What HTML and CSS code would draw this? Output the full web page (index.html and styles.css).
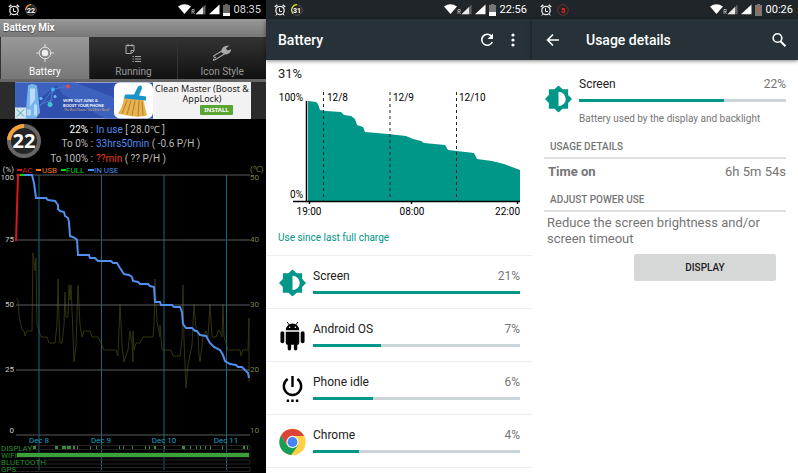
FILE: index.html
```html
<!DOCTYPE html>
<html lang="en">
<head>
  <meta charset="UTF-8">
  <title>Battery</title>
  <meta name="viewport" content="width=device-width, initial-scale=1.0">
  <link rel="stylesheet" href="styles.css">
</head>
<body>
  <!-- shared icons -->
  <svg class="defs" width="0" height="0">
    <symbol id="alarm" viewBox="0 0 12 12">
      <g fill="none" stroke="#e8e8e8">
        <circle cx="6" cy="6.5" r="4.2" stroke-width="1.3"/>
        <path d="M.8 3 3.3.9M11.200 3 8.700.9" stroke-width="1.500"/>
        <path d="M2.800 10 1.800 11.500M9.200 10 10.200 11.500M5.500 4.200V7.500H8"/>
      </g>
    </symbol>
    <symbol id="signals" viewBox="0 0 54 13">
      <path d="M0 3.500Q6.500-1 13 3.500L6.500 11Z" fill="#fff"/>
      <path d="M14 11V6.500H16.200V8.500H14M15 8.500 16.500 11" fill="none" stroke="#bbb" stroke-width=".8"/>
      <path d="M17.500 11.200 27.500 1.500V11.200Z" fill="#666"/>
      <path d="M17.500 11.200 25 4V11.200Z" fill="#e8e8e8"/>
      <path d="M31 11.200 41.500 1.500V11.200Z" fill="#fff"/>
    </symbol>
    <symbol id="brightness" viewBox="0 0 28 28">
      <path d="M14 0 18.200 4H24V9.800L28 14 24 18.200V24H18.200L14 28 9.800 24H4V18.200L0 14 4 9.800V4H9.800Z" fill="#009688"/>
      <path d="M14 6.500A7.500 7.500 0 0 1 14 21.500Z" fill="#fff"/>
    </symbol>
  </svg>

  <div class="screens">
    <section class="phone mix">
      <div class="status">
        <svg class="alarm"><use href="#alarm"/></svg>
        <svg class="ring" viewBox="0 0 12 12">
          <circle cx="6" cy="6" r="5.3" fill="#222" stroke="#555"/>
          <path d="M.7 6A5.300 5.300 0 0 1 6 .7" fill="none" stroke="#f59a23" stroke-width="1.300"/>
          <text x="6" y="8.500" fill="#fff">22</text>
        </svg>
        <svg class="signals"><use href="#signals"/></svg>
        <svg class="cell" viewBox="0 0 7 12"><path d="M0 1H2V0H5V1H7V12H0Z" fill="#666"/><path d="M0 9H7V12H0Z" fill="#fff"/></svg>
        <span>08:35</span>
      </div>
      <h1 class="mix-title">Battery Mix</h1>
      <nav class="tabs">
        <button class="active">
          <svg viewBox="0 0 18 18"><g fill="none" stroke="#ddd"><circle cx="9" cy="9" r="5.800"/><path d="M9 0V4M9 14V18M0 9H4M14 9H18"/></g><circle cx="9" cy="9" r="3.200" fill="#eee"/></svg>
          Battery
        </button>
        <button>
          <svg viewBox="0 0 18 18"><g fill="none" stroke="#aaa"><path d="M2 1.500H10V7L7.500 9.500H2ZM7 9V6.500H10M4 0V2.500M8 0V2.500"/><path d="M11 12.500H17M11 15H17M11 17.500H17M8.500 12.500H9.800M8.500 15H9.800M8.500 17.500H9.800"/></g></svg>
          Running
        </button>
        <button>
          <svg viewBox="0 0 18 18"><path d="M1 14 10 8.500" stroke="#aaa" stroke-width="5" stroke-linecap="round"/><path d="M1.500 13.800 10 8.500" stroke="#222" stroke-width="2.800" stroke-linecap="round"/><circle cx="2" cy="13.500" r=".9" fill="#aaa"/><path d="M8.500 8.500Q8 3.500 12.500 2L16.500 1.500 13 4.200 14.500 6.500 18.500 5Q17.500 10 12 10.500Z" fill="#aaa"/></svg>
          Icon Style
        </button>
      </nav>
      <div class="ad">
        <a href="#">
          <svg class="ad-art" viewBox="0 0 138 36">
            <rect width="138" height="36" fill="#3150ae"/>
            <path d="M0 36 45 0H0ZM40 0 48 12 90 36H138V30L60 0Z" fill="#3c62bd"/>
            <path d="M13 3Q17 0 22 3L25 30 21 36H11V28Z" fill="#78b4ec"/>
            <path d="M15 6H20V17L15 24ZM12 27H16V33H12ZM19 22H22V33H19Z" fill="#b9dafa"/>
            <path d="M25 24 38 7 53 3M38 7 35 22M25 22 38 17" fill="none" stroke="#5078d5"/>
            <circle cx="53" cy="4" r="2" fill="#e44b58"/>
            <circle cx="38" cy="7" r="2" fill="#38b5ee"/>
            <circle cx="35" cy="22" r="2.500" fill="#40c8c9"/>
            <circle cx="26" cy="16" r="1.500" fill="#5ac6fa"/>
            <circle cx="40" cy="14" r="1.500" fill="#5ac6fa"/>
            <rect y="25" width="11" height="11" fill="#d7e4eb"/>
            <path d="M2 27 9 34M9 27 2 34" stroke="#36a9bd"/>
            <text x="48" y="19">WIPE OUT JUNK &amp;</text>
            <text x="48" y="24">BOOST YOUR PHONE</text>
            <text class="tiny" x="49" y="28">The Best Cleaner You'll Ever Need!</text>
            <rect x="99" width="39" height="36" rx="6" fill="#fff"/>
            <path d="M109 15 128 16 132 33Q122 36 103 31Q108 24 109 15Z" fill="#e6b450"/>
            <path d="M112 18 107 31M116 18 112 32M120 18 117 33M124 18 123 34M127 19 128 33" stroke="#b87b29" fill="none"/>
            <path d="M110 12 119 12 123 4Q127 1 127 6L124 13 131 14V18L109 16Z" fill="#1c94c9"/>
          </svg>
          <span class="ad-copy">Clean Master (Boost &amp; AppLock) <b>INSTALL</b></span>
        </a>
      </div>
      <div class="summary">
        <svg viewBox="0 0 36 36">
          <circle cx="18" cy="18" r="15" fill="#252525" stroke="#666" stroke-width="4"/>
          <path d="M3 17A15 15 0 0 1 18 3" fill="none" stroke="#f7a13a" stroke-width="4"/>
          <text x="18" y="25">22</text>
        </svg>
        <dl>
          <dt><strong>22%</strong> :</dt><dd><span class="blue">In use</span> [ 28.0℃ ]</dd>
          <dt>To 0% :</dt><dd><span class="blue">33hrs50min</span> ( -0.6 P/H )</dd>
          <dt>To 100% :</dt><dd><span class="red">??min</span> ( ?? P/H )</dd>
        </dl>
      </div>
      <svg class="history" viewBox="0 166 266 307">
        <path d="M16 298 18 300 19 315 22 330 24 331 25 336 27 331 32 331 33 253 35 271 36 258 37 325 39 331 41 337 47 337 49 343 55 343 57 325 58 279 59 320 60 343 62 343 64 325 65 292 66 317 68 317 69 285 70 300 71 285 73 335 74 362 76 345 78 285 80 325 82 337 84 331 90 331 92 337 98 337 101 343 104 350 116 350 118 356 120 304 122 345 124 362 128 350 130 331 132 343 133 362 133 331 134 350 136 343 140 343 143 337 153 337 154 325 155 279 157 322 160 337 160 325 162 350 171 350 173 356 180 356 182 340 183 285 184 340 186 388 188 365 192 345 194 304 196 330 198 335 199 355 200 362 203 337 206 331 208 337 210 304 212 337 216 337 218 331 220 331 222 337 223 304 224 337 226 343 228 350 240 350 241 356 243 350 248 350 249 318 249 382" class="temp"/>
        <path d="M16 175H250M16 240H250M16 305H250M16 370H250M16 435H250" class="grid"/>
        <path d="M39 175V470M101.500 175V470M164 175V470M226.500 175V470" class="days"/>
        <g class="tracks">
          <path d="M31 445.500H250V449.500H31M17 453H250V457H17M45 460H250V464H45M16 467.500H250V471.500H16"/>
        </g>
        <path d="M33 447.500H36M55 447.500H58M62 447.500H66M67 447.500H71M73 447.500H75M77 447.500H78M90 447.500H91M96 447.500H97M119 447.500H120M123 447.500H124M132 447.500H133M145 447.500H146M149 447.500H150M154 447.500H156M164 447.500H165M182 447.500H185M190 447.500H191M196 447.500H197M200 447.500H201M205 447.500H206M210 447.500H211M222 447.500H223M243 447.500H245M247 447.500H248" stroke="#338f35" stroke-width="3"/>
        <rect x="17" y="453" width="232" height="4" fill="#3ba23b"/>
        <path d="M16 241 18 175H21" class="line" stroke="#d51a1a"/>
        <path d="M20 175H25" class="line" stroke="#0d0"/>
        <path d="M24 175H32L34 183 36 198H46L48 200 55 201 58 205V209L60 211 64 212 65 216 68 218 69 222 70 236 75 238 77 240 78 255H89L90 258H95L98 261H111L113 263H117L120 268 124 274 129 275 132 277 133 281 138 282 140 284H148L150 286 154 287 155 302H160L161 305H172L174 307H180L182 312 183 324 186 328H192L195 331H197L200 335 206 336 210 343 214 347 220 350 223 355 225 361 230 364 236 365 238 367H242L246 371 248 373 249 378" class="line" stroke="#4f8ff0"/>
        <g class="left">
          <text x="14" y="172">(%)</text><text x="14" y="180">100</text><text x="14" y="242">75</text><text x="14" y="307">50</text><text x="14" y="372">25</text><text x="14" y="433">0</text>
        </g>
        <g fill="#7d7d46">
          <text x="250" y="172">(℃)</text><text x="250" y="180">50</text><text x="250" y="242">40</text><text x="250" y="307">30</text><text x="250" y="372">20</text><text x="250" y="433">10</text>
        </g>
        <path d="M17 170H22" class="line" stroke="#d51a1a"/><text x="22" y="173" fill="#d51a1a">AC</text>
        <path d="M36 170H41" class="line" stroke="#e87722"/><text x="42" y="173" fill="#e87722">USB</text>
        <path d="M61 170H66" class="line" stroke="#0d0"/><text x="66" y="173" fill="#0c0">FULL</text>
        <path d="M88 170H94" class="line" stroke="#4f8ff0"/><text x="94" y="173" fill="#4f8ff0">IN USE</text>
        <g class="dates">
          <text x="39" y="443">Dec 8</text><text x="101" y="443">Dec 9</text><text x="164" y="443">Dec 10</text><text x="226" y="443">Dec 11</text>
        </g>
        <g fill="#2f8f35">
          <text x="1" y="451">DISPLAY</text><text x="1" y="458">WIFI</text><text x="1" y="465">BLUETOOTH</text><text x="1" y="472">GPS</text>
        </g>
      </svg>
    </section>

    <section class="phone">
      <div class="status">
        <svg class="alarm"><use href="#alarm"/></svg>
        <svg class="ring" viewBox="0 0 12 12">
          <circle cx="6" cy="6" r="5.300" fill="#222" stroke="#555"/>
          <path d="M2 9.500A5.300 5.300 0 0 1 6 .7" fill="none" stroke="#d8d820" stroke-width="1.300"/>
          <text x="6" y="8.500" fill="#fff">31</text>
        </svg>
        <svg class="signals"><use href="#signals"/></svg>
        <svg class="cell" viewBox="0 0 7 12"><path d="M0 1H2V0H5V1H7V12H0Z" fill="#777"/><path d="M0 8H7V12H0Z" fill="#fff"/></svg>
        <span>22:56</span>
      </div>
      <header class="appbar">
        <h1>Battery</h1>
        <button aria-label="Refresh"><svg viewBox="0 0 16 16"><path d="M12.500 4.200A5.500 5.500 0 1 0 13.300 10" fill="none" stroke="#fff" stroke-width="1.600"/><path d="M14 1.500V7H8.500Z" fill="#fff"/></svg></button>
        <button aria-label="More options"><svg viewBox="0 0 16 16" fill="#fff"><circle cx="8" cy="3" r="1.600"/><circle cx="8" cy="8" r="1.600"/><circle cx="8" cy="13" r="1.600"/></svg></button>
      </header>
      <p class="level">31%</p>
      <svg class="usage" viewBox="0 88 266 132">
        <path d="M42 101 50 102 52 104 54 110 60 111 75 112 78 115 85 116 89 119 91 125 97 127 99 132 122 134 140 136 147 139 155 141 158 143 179 145 182 150 208 153 211 159 226 161 238 164 254 170V201H42Z" fill="#009688"/>
        <path d="M40.500 101V202M27 201.500H254M43.500 202V204M145.500 202V204M251.500 202V204" stroke="#000" fill="none" stroke-width="1.500"/>
        <path d="M57.500 92V201M124 92V201M190.500 92V201" stroke="#222" stroke-dasharray="3 3"/>
        <g class="left"><text x="37" y="101">100%</text><text x="37" y="198">0%</text></g>
        <text x="61" y="101">12/8</text><text x="127" y="101">12/9</text><text x="193" y="101">12/10</text>
        <g class="dates"><text x="43" y="215">19:00</text><text x="146" y="215">08:00</text></g>
        <text class="left" x="254" y="215">22:00</text>
      </svg>
      <p class="since">Use since last full charge</p>
      <ul class="apps">
        <li>
          <svg viewBox="0 0 28 28"><use href="#brightness"/></svg>
          <div class="app"><span>Screen</span><span class="pct">21%</span><div class="bar"><i style="width: 100%"></i></div></div>
        </li>
        <li>
          <svg viewBox="0 0 28 30">
            <path d="M7 9A7 7 0 0 1 21 9ZM7 10.500H21V22Q21 24 19.500 24H19V28Q19 30 17.200 30T15.400 28V24H12.600V28Q12.600 30 10.800 30T9 28V24H8.500Q7 24 7 22Z"/>
            <rect x="1.500" y="10" width="4" height="12.500" rx="2"/><rect x="22.500" y="10" width="4" height="12.500" rx="2"/>
            <path d="M8.500.5 10.500 3.500M19.500.5 17.500 3.500" stroke="#000"/>
            <circle cx="11" cy="6" r=".8" fill="#fff"/><circle cx="17" cy="6" r=".8" fill="#fff"/>
          </svg>
          <div class="app"><span>Android OS</span><span class="pct">7%</span><div class="bar"><i style="width: 33%"></i></div></div>
        </li>
        <li>
          <svg viewBox="0 0 28 28"><path d="M9 3.700A9 9 0 1 0 19 3.700M14 .5V12" fill="none" stroke="#000" stroke-width="2.500"/><path d="M8 25H10.500V27.500H8ZM12.700 25H15.200V27.500H12.700ZM17.500 25H20V27.500H17.500Z"/></svg>
          <div class="app"><span>Phone idle</span><span class="pct">6%</span><div class="bar"><i style="width: 29%"></i></div></div>
        </li>
        <li>
          <svg viewBox="0 0 28 28">
            <circle cx="14" cy="14" r="13.700" fill="#ffd044"/>
            <path d="M2.200 7A13.700 13.700 0 0 0 12.500 27.600L20 17.400 14 14 8.500 17.500Z" fill="#159e58"/>
            <path d="M2.200 7A13.700 13.700 0 0 1 26 7.700H14L8 17Z" fill="#db4437"/>
            <circle cx="14" cy="14" r="6.400" fill="#f4f4f4"/><circle cx="14" cy="14" r="5.100" fill="#4285f4"/>
          </svg>
          <div class="app"><span>Chrome</span><span class="pct">4%</span><div class="bar"><i style="width: 22%"></i></div></div>
        </li>
      </ul>
    </section>

    <section class="phone">
      <div class="status">
        <svg class="alarm"><use href="#alarm"/></svg>
        <svg class="ring" viewBox="0 0 12 12">
          <circle cx="6" cy="6" r="5.300" fill="#222" stroke="#633"/>
          <text x="6" y="8.500" fill="#f22">5</text>
        </svg>
        <svg class="signals"><use href="#signals"/></svg>
        <svg class="cell" viewBox="0 0 7 12"><path d="M0 1H2V0H5V1H7V12H0Z" fill="#777"/><path d="M3.500 2.500V7.500M3.500 8.800V10.200" stroke="#d9532c" stroke-width="1.500"/></svg>
        <span>00:26</span>
      </div>
      <header class="appbar details">
        <button aria-label="Back"><svg viewBox="0 0 16 16"><path d="M14 8H3M8 2.500 2.500 8 8 13.500" fill="none" stroke="#fff" stroke-width="1.600"/></svg></button>
        <h1>Usage details</h1>
        <button aria-label="Search"><svg viewBox="0 0 16 16"><circle cx="6.500" cy="6" r="4.300" fill="none" stroke="#fff" stroke-width="1.600"/><path d="M9.500 9.200 14.500 14.200" stroke="#fff" stroke-width="2"/></svg></button>
      </header>
      <div class="current">
        <svg viewBox="0 0 28 28"><use href="#brightness"/></svg>
        <div class="app"><span>Screen</span><span class="pct">22%</span><div class="bar"><i style="width: 70%"></i></div><p>Battery used by the display and backlight</p></div>
      </div>
      <div class="section">
        <h2>USAGE DETAILS</h2>
        <p class="time"><b>Time on</b><span>6h 5m 54s</span></p>
      </div>
      <div class="section">
        <h2>ADJUST POWER USE</h2>
        <p class="advice">Reduce the screen brightness and/or screen timeout</p>
        <button class="display">DISPLAY</button>
      </div>
    </section>
  </div>
</body>
</html>
```
FILE: styles.css
```css
* {
  box-sizing: border-box;
}
body {
  margin: 0;
  background: #fff;
  color: #212121;
  font-family: Roboto, sans-serif;
  font-size: 12px;
}
h1, h2, p, ul, dl, dd {
  margin: 0;
  padding: 0;
}
button {
  border: none;
  padding: 0;
  background: none;
  font-family: inherit;
  cursor: pointer;
}
svg {
  display: block;
  flex: none;
}
.defs {
  position: absolute;
}
.screens {
  display: grid;
  grid-template-columns: repeat(3, 1fr);
  min-height: 100vh;
}
.phone {
  min-width: 0;
}

/* status bar */
.status {
  display: flex;
  align-items: center;
  height: 19px;
  padding: 0 5px 0 8px;
  background: #1f2528;
  color: #fff;
  font-size: 11px;
}
.alarm {
  width: 12px;
  height: 12px;
}
.ring {
  width: 12px;
  height: 12px;
  margin-left: 5px;
  font-size: 7px;
  font-weight: bold;
  text-anchor: middle;
}
.signals {
  width: 54px;
  height: 13px;
  margin-left: auto;
}
.cell {
  width: 7px;
  height: 12px;
  margin: 0 4px 0 -9px;
}

/* Battery Mix */
.mix {
  background: #000;
  color: #bbb;
}
.mix .status {
  background: #000;
  color: #ddd;
}
.mix-title {
  height: 18px;
  padding-left: 3px;
  background: linear-gradient(#999, #777);
  color: #fff;
  font-size: 10px;
  line-height: 18px;
  text-shadow: 0 1px 1px #444;
}
.tabs {
  display: grid;
  grid-template-columns: repeat(3, 1fr);
  height: 45px;
  border-bottom: 3px solid #666;
  background: #000;
}
.tabs button {
  display: flex;
  flex-direction: column;
  align-items: center;
  gap: 3px;
  padding-top: 7px;
  border-left: 1px solid #333;
  background: linear-gradient(#333, #111);
  color: #999;
  font-size: 10px;
  line-height: 13px;
}
.tabs svg {
  width: 18px;
  height: 18px;
}
.tabs .active {
  background: linear-gradient(#999, #777);
  color: #fff;
}
.ad {
  padding: 0 15px;
  background: #2b2b2b;
}
.ad a {
  display: flex;
  height: 37px;
  background: #f2f2f2;
  color: #222;
  text-decoration: none;
}
.ad-art {
  width: 138px;
  height: 37px;
  fill: #fff;
  font-family: Lato, sans-serif;
  font-size: 4px;
  font-weight: bold;
}
.ad-art .tiny {
  font-size: 3px;
  font-weight: normal;
  fill: #d8b06a;
}
.ad-copy {
  flex: 1;
  padding-top: 2px;
  font-family: "Noto Sans", sans-serif;
  font-size: 9px;
  line-height: 10px;
  text-align: center;
}
.ad-copy b {
  display: block;
  width: 33px;
  margin: 1px auto 0 47px;
  border-radius: 1px;
  background: #5ba632;
  color: #fff;
  font-size: 6px;
}
.summary {
  display: flex;
  height: 47px;
  padding: 4px 0 0 6px;
}
.summary svg {
  width: 36px;
  height: 36px;
  fill: #fff;
  font-family: "Noto Sans", sans-serif;
  font-size: 20px;
  font-weight: bold;
  text-anchor: middle;
}
.summary dl {
  display: grid;
  grid-template-columns: 51px 1fr;
  gap: 0 3px;
  font-size: 10px;
  line-height: 14px;
  white-space: nowrap;
}
.summary dt {
  text-align: right;
}
.summary strong {
  color: #fff;
  font-weight: normal;
}
.blue {
  color: #4f8ff0;
}
.red {
  color: #e83a20;
}
.history {
  width: 100%;
  height: auto;
  font-size: 8px;
}
.history .left {
  fill: #ccc;
}
.left {
  text-anchor: end;
}
.dates {
  text-anchor: middle;
}
.history .dates {
  fill: #18a0c4;
}
.temp {
  fill: none;
  stroke: #34340f;
}
.grid {
  stroke: #5c5c5c;
}
.days {
  stroke: #16687c;
}
.tracks {
  fill: none;
  stroke: #252525;
}
.line {
  fill: none;
  stroke-width: 2;
}

/* system battery settings */
.appbar {
  display: flex;
  align-items: center;
  height: 41px;
  padding: 0 11px 0 12px;
  background: #263238;
  box-shadow: 0 1px 4px rgba(0,0,0,0.5);
  color: #fff;
}
.appbar h1 {
  flex: 1;
  font-size: 14px;
  font-weight: 500;
}
.appbar svg {
  width: 16px;
  height: 16px;
}
.appbar button + button {
  margin-left: 10px;
}
.appbar.details {
  padding-left: 13px;
}
.details h1 {
  margin-left: 25px;
}
.level {
  padding: 6px 12px 0;
  font-size: 13px;
  line-height: 16px;
}
.usage {
  width: 100%;
  height: auto;
  margin-top: 6px;
  font-size: 10px;
}
.since {
  padding: 11px 12px 10px;
  color: #009688;
  font-size: 10px;
  line-height: 14px;
}
.apps {
  border-top: 1px solid #eee;
  list-style: none;
}
.apps li,
.current {
  display: flex;
  gap: 7px;
  padding: 12px 12px 0 13px;
}
.apps li {
  height: 53px;
  border-bottom: 1px solid #eee;
}
.apps svg,
.current svg {
  width: 27px;
  height: 30px;
}
.app {
  flex: 1;
  display: grid;
  grid-template-columns: 1fr auto;
  align-content: start;
  line-height: 16px;
}
.pct {
  color: #757575;
}
.bar {
  grid-column: 1 / 3;
  height: 3px;
  margin-top: 7px;
  background: #cad4d9;
}
.bar i {
  display: block;
  height: 3px;
  background: #009688;
}

/* usage details */
.current {
  padding-top: 16px;
}
.current svg {
  margin-top: 8px;
}
.current p {
  grid-column: 1 / 3;
  margin-top: 9px;
  color: #757575;
  font-size: 10px;
}
.section {
  margin: 0 12px;
  color: #757575;
  font-size: 13px;
}
.section h2 {
  padding: 13px 6px 3px;
  border-bottom: 2px solid #e0e0e0;
  font-size: 10px;
  font-weight: 500;
  line-height: 14px;
}
.time {
  display: flex;
  justify-content: space-between;
  padding: 5px 0 0 4px;
  line-height: 16px;
}
.advice {
  padding: 3px 0 0 3px;
  line-height: 16px;
}
.display {
  display: block;
  width: 142px;
  height: 27px;
  margin: 7px 10px 0 auto;
  border-radius: 2px;
  background: #d6d7d7;
  color: #212121;
  font-size: 10px;
  font-weight: 500;
}
```
